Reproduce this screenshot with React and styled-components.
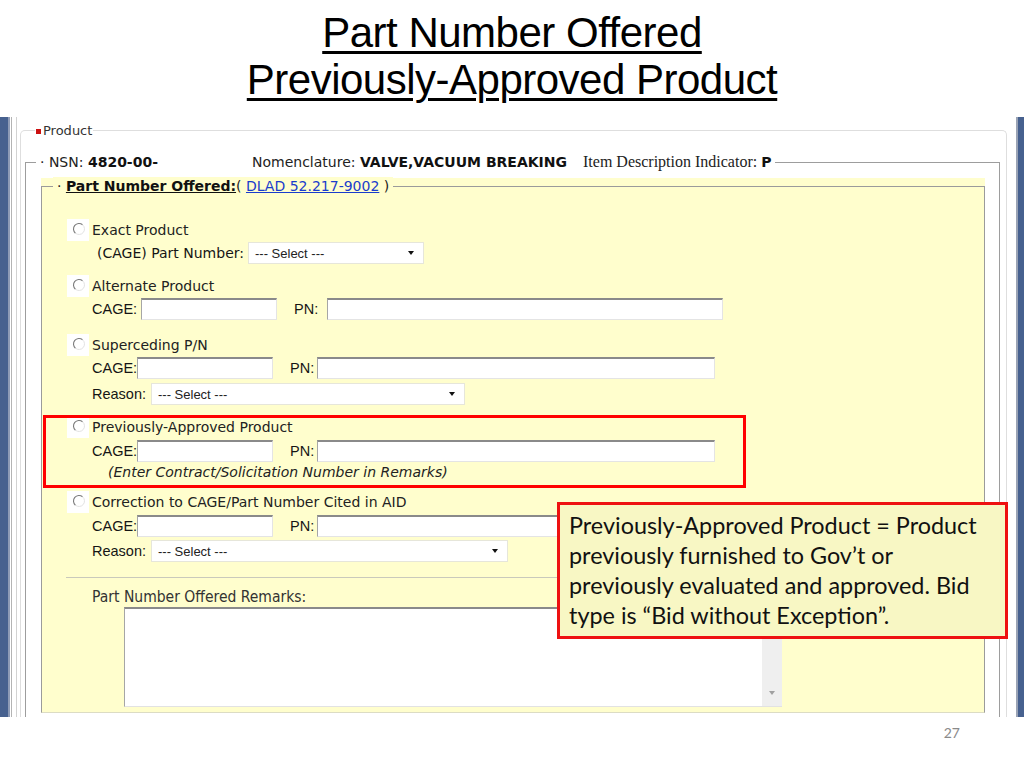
import React from "react";
import styled, { createGlobalStyle } from "styled-components";

const GlobalStyle = createGlobalStyle`
  html, body {
    margin: 0;
    padding: 0;
    background: #fff;
  }
  body {
    font-family: "Liberation Sans", Arial, sans-serif;
  }
`;

const Slide = styled.div`
  position: relative;
  width: 1024px;
  height: 768px;
  overflow: hidden;
  background: #fff;
  display: flex;
  flex-direction: column;
`;

const Title = styled.h1`
  margin: 0;
  height: 117px;
  box-sizing: border-box;
  padding-top: 9px;
  text-align: center;
  font-family: "Liberation Sans", Arial, sans-serif;
  font-weight: 400;
  font-size: 42px;
  line-height: 47px;
  letter-spacing: -0.5px;
  color: #000;
  flex: none;

  span {
    text-decoration: underline;
    text-decoration-thickness: 2.5px;
    text-underline-offset: 4px;
  }
`;

const Shot = styled.div`
  height: 600px;
  flex: none;
  display: flex;
  overflow: hidden;
`;

const LeftEdge = styled.div`
  width: 20px;
  flex: none;
  background: linear-gradient(
    to right,
    #47618f 0 8px,
    #8e9bb6 8px 10px,
    #fff 10px 11px,
    #b4b4b4 11px 12px,
    #fff 12px 16px,
    #d2d2d2 16px 17px,
    #fff 17px
  );
`;

const RightEdge = styled.div`
  width: 17px;
  flex: none;
  background: linear-gradient(to right, #fff 0 9px, #9aa3b5 9px 11px, #47618f 11px);
`;

const Main = styled.div`
  flex: 1;
  padding-top: 13px;
  min-width: 0;
`;

const ProductFrame = styled.div`
  border: 1px solid #dedede;
  border-bottom: none;
  border-radius: 5px 5px 0 0;
  padding: 0 6px 0 4px;
`;

const ProductLegend = styled.div`
  display: flex;
  align-items: center;
  width: max-content;
  height: 16px;
  margin: -9px 0 0 10px;
  padding: 0 1px;
  background: #fff;
  font-family: "DejaVu Sans", Verdana, sans-serif;
  font-size: 13px;
  color: #333;
`;

const RedDot = styled.span`
  width: 5px;
  height: 5px;
  margin: 2px 2px 0 0;
  background: #cc1111;
`;

const NsnFrame = styled.div`
  margin-top: 24px;
  border: 1px solid #9d9d9d;
  border-bottom: none;
  padding: 0 14px 30px 15px;
`;

const Legend = styled.div`
  display: flex;
  align-items: center;
  width: max-content;
  height: 18px;
  margin: -10px 0 0 ${(p) => p.$left}px;
  padding: 0 4px;
  background: ${(p) => p.$bg};
  font-family: "DejaVu Sans", Verdana, sans-serif;
  font-size: 14px;
  color: #222;
  white-space: nowrap;

  b {
    color: #111;
  }
`;

const LegendPart = styled.span`
  display: inline-block;
  width: ${(p) => (p.$w ? `${p.$w}px` : "auto")};
  flex: none;
`;

const SerifText = styled.span`
  margin-left: 16px;
  font-family: "Liberation Serif", "Times New Roman", serif;
  font-size: 16px;
  color: #222;

  b {
    font-family: "DejaVu Sans", Verdana, sans-serif;
    font-size: 14px;
  }
`;

const YellowPanel = styled.div`
  margin-top: 7px;
  padding-top: 8px;
  background: #fffecd;
`;

const InnerFrame = styled.div`
  border: 1px solid #9b9b9b;
  border-bottom-color: #dcdcc4;
  padding-bottom: 5px;
`;

const Underlined = styled.b`
  text-decoration: underline;
`;

const Link = styled.a`
  color: #1a3ccc;
  text-decoration: underline;
`;

const Option = styled.div`
  margin-top: ${(p) => p.$top}px;
  padding-left: 25px;
  display: flex;
  flex-direction: column;
`;

const OptionHead = styled.div`
  display: flex;
  align-items: center;
  height: 22px;
  gap: 3px;
  font-family: "DejaVu Sans", Verdana, sans-serif;
  font-size: 14px;
  color: #222;
`;

const RadioBox = styled.span`
  width: 22px;
  height: 22px;
  flex: none;
  background: #fff;
  display: flex;
`;

const FieldRow = styled.div`
  display: flex;
  align-items: center;
  height: 22px;
  margin-top: ${(p) => p.$top || 0}px;
  padding-left: ${(p) => p.$indent}px;
`;

const FieldLabel = styled.span`
  flex: none;
  width: ${(p) => p.$w}px;
  margin-left: ${(p) => p.$gap || 0}px;
  font-family: ${(p) =>
    p.$verdana ? `"DejaVu Sans", Verdana, sans-serif` : `"Liberation Sans", Arial, sans-serif`};
  font-size: ${(p) => (p.$verdana ? 14 : 14.5)}px;
  color: #151515;
  white-space: nowrap;
`;

const TextBox = styled.div`
  flex: none;
  width: ${(p) => p.$w}px;
  height: 22px;
  box-sizing: border-box;
  background: #fff;
  border-top: 2px solid #8a8a8a;
  border-left: 1px solid #a6a6a6;
  border-right: 1px solid #e4e4e4;
  border-bottom: 1px solid #e4e4e4;
`;

const Select = styled.div`
  flex: none;
  width: ${(p) => p.$w}px;
  height: 22px;
  box-sizing: border-box;
  display: flex;
  align-items: center;
  justify-content: space-between;
  padding: 0 9px 0 6px;
  background: #fff;
  border: 1px solid #e6e6da;
  font-family: "Liberation Sans", Arial, sans-serif;
  font-size: 13px;
  color: #222;
`;

const Caret = styled.span`
  width: 0;
  height: 0;
  border-left: 3.5px solid transparent;
  border-right: 3.5px solid transparent;
  border-top: 4px solid ${(p) => p.$color || "#111"};
`;

const Note = styled.div`
  height: 20px;
  line-height: 20px;
  padding-left: 41px;
  font-family: "DejaVu Sans", Verdana, sans-serif;
  font-style: italic;
  font-size: 14px;
  color: #222;
`;

const Rule = styled.div`
  margin: 15px 23px 0 24px;
  height: 1px;
  border-top: 1px solid #c9c9bb;
`;

const RemarksLabel = styled.div`
  margin-top: 9px;
  padding-left: 50px;
  height: 18px;
  line-height: 18px;
  font-family: "DejaVu Sans Condensed", "DejaVu Sans", sans-serif;
  font-size: 15.5px;
  color: #333;
`;

const RemarksBox = styled.div`
  margin: 1px 0 0 82px;
  width: 658px;
  height: 100px;
  box-sizing: border-box;
  display: flex;
  justify-content: flex-end;
  background: #fff;
  border-top: 2px solid #8a8a8a;
  border-left: 1px solid #a6a6a6;
  border-bottom: 1px solid #e2e2e2;
`;

const ScrollTrack = styled.div`
  width: 20px;
  display: flex;
  flex-direction: column;
  justify-content: flex-end;
  align-items: center;
  padding-bottom: 11px;
  box-sizing: border-box;
  background: #efefef;
`;

const Footer = styled.div`
  flex: 1;
  padding: 8px 64px 0 0;
  text-align: right;
  font-family: Lato, "Open Sans", sans-serif;
  font-size: 14px;
  line-height: 16px;
  color: #8a8a8a;
`;

const RedBox = styled.div`
  position: absolute;
  left: 43px;
  top: 415px;
  width: 703px;
  height: 73px;
  box-sizing: border-box;
  border: 3px solid #f00;
`;

const Callout = styled.div`
  position: absolute;
  left: 557px;
  top: 502px;
  width: 451px;
  height: 137px;
  box-sizing: border-box;
  padding: 5px 0 0 9px;
  border: 3px solid #ee1111;
  background: #f8f7c4;
  font-family: Lato, "Open Sans", sans-serif;
  font-size: 23.4px;
  line-height: 30px;
  color: #111;
  white-space: nowrap;
`;

function Radio() {
  return (
    <RadioBox>
      <svg width="22" height="22" viewBox="0 0 22 22">
        <circle cx="12" cy="10" r="5.5" fill="#fff" />
        <path d="M15.54 5.79 A5.5 5.5 0 1 0 8.46 14.21" fill="none" stroke="#7a7a7a" strokeWidth="1.1" />
        <path d="M8.46 14.21 A5.5 5.5 0 0 0 15.54 5.79" fill="none" stroke="#e2e2e2" strokeWidth="1" />
      </svg>
    </RadioBox>
  );
}

function CagePn({ top, big }) {
  return (
    <FieldRow $indent={25} $top={top}>
      <FieldLabel $w={big ? 49 : 45}>CAGE:</FieldLabel>
      <TextBox $w={136} />
      <FieldLabel $w={big ? 33 : 27} $gap={17}>PN:</FieldLabel>
      <TextBox $w={big ? 396 : 398} />
    </FieldRow>
  );
}

function Reason({ top, width }) {
  return (
    <FieldRow $indent={25} $top={top}>
      <FieldLabel $w={59}>Reason:</FieldLabel>
      <Select $w={width}>
        --- Select ---
        <Caret />
      </Select>
    </FieldRow>
  );
}

export default function App() {
  return (
    <>
      <GlobalStyle />
      <Slide>
        <Title>
          <span>Part Number Offered</span>
          <br />
          <span>Previously-Approved Product</span>
        </Title>

        <Shot>
          <LeftEdge />
          <Main>
            <ProductFrame>
              <ProductLegend>
                <RedDot />
                Product
              </ProductLegend>

              <NsnFrame>
                <Legend $left={-5} $bg="#fff">
                  <LegendPart $w={212}>
                    · NSN: <b>4820-00-</b>
                  </LegendPart>
                  <LegendPart>
                    Nomenclature: <b>VALVE,VACUUM BREAKING</b>
                  </LegendPart>
                  <SerifText>
                    Item Description Indicator: <b>P</b>
                  </SerifText>
                </Legend>

                <YellowPanel>
                  <InnerFrame>
                    <Legend $left={11} $bg="#fffecd">
                      ·&nbsp;<Underlined>Part Number Offered:</Underlined>(&nbsp;
                      <Link href="#">DLAD 52.217-9002</Link>&nbsp;)
                    </Legend>

                    <Option $top={24}>
                      <OptionHead>
                        <Radio />
                        Exact Product
                      </OptionHead>
                      <FieldRow $indent={30} $top={1}>
                        <FieldLabel $w={151} $verdana>
                          (CAGE) Part Number:
                        </FieldLabel>
                        <Select $w={176}>
                          --- Select ---
                          <Caret />
                        </Select>
                      </FieldRow>
                    </Option>

                    <Option $top={11}>
                      <OptionHead>
                        <Radio />
                        Alternate Product
                      </OptionHead>
                      <CagePn top={1} big />
                    </Option>

                    <Option $top={14}>
                      <OptionHead>
                        <Radio />
                        Superceding P/N
                      </OptionHead>
                      <CagePn top={1} />
                      <Reason top={4} width={314} />
                    </Option>

                    <Option $top={11}>
                      <OptionHead>
                        <Radio />
                        Previously-Approved Product
                      </OptionHead>
                      <CagePn top={2} />
                      <Note>(Enter Contract/Solicitation Number in Remarks)</Note>
                    </Option>

                    <Option $top={9}>
                      <OptionHead>
                        <Radio />
                        Correction to CAGE/Part Number Cited in AID
                      </OptionHead>
                      <CagePn top={2} />
                      <Reason top={3} width={357} />
                    </Option>

                    <Rule />
                    <RemarksLabel>Part Number Offered Remarks:</RemarksLabel>
                    <RemarksBox>
                      <ScrollTrack>
                        <Caret $color="#a0a0a0" />
                      </ScrollTrack>
                    </RemarksBox>
                  </InnerFrame>
                </YellowPanel>
              </NsnFrame>
            </ProductFrame>
          </Main>
          <RightEdge />
        </Shot>

        <Footer>27</Footer>

        <RedBox />
        <Callout>
          Previously-Approved Product = Product
          <br />
          previously furnished to Gov’t or
          <br />
          previously evaluated and approved. Bid
          <br />
          type is “Bid without Exception”.
        </Callout>
      </Slide>
    </>
  );
}
